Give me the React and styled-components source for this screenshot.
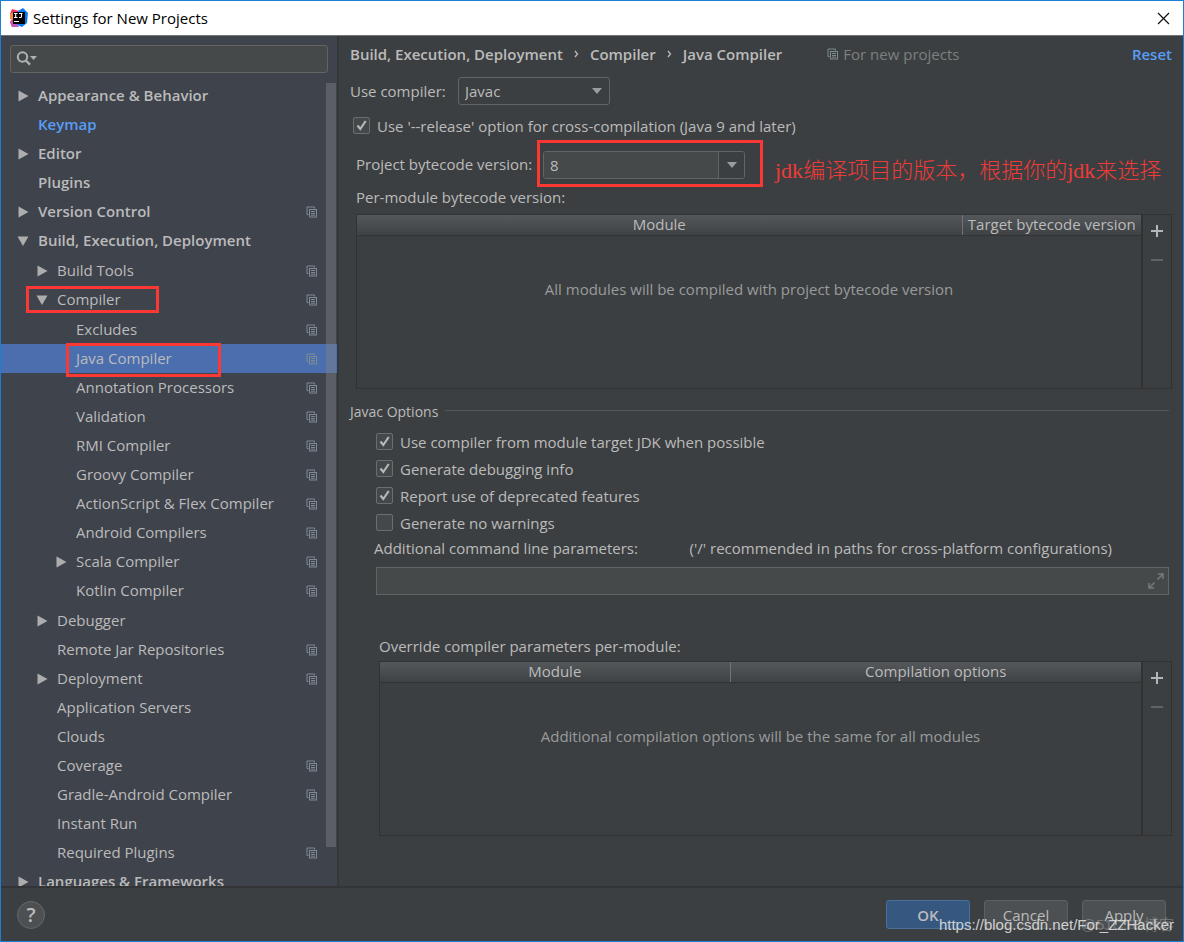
import React from "react";
import styled, { createGlobalStyle, css } from "styled-components";

const GlobalStyle = createGlobalStyle`
  *, *::before, *::after { box-sizing: border-box; }
  body {
    margin: 0;
    background: #3c3f41;
    color: #bbbbbb;
    font-family: "Open Sans", "Noto Sans", "Noto Sans CJK SC", sans-serif;
    font-size: 15px;
    line-height: 20px;
  }
  button, input, select { font: inherit; color: inherit; }
`;

const Window = styled.div`
  position: relative;
  display: flex;
  flex-direction: column;
  height: 100vh;
  border: 1px solid #1d7fd3;
  overflow: hidden;
`;

const TitleBar = styled.header`
  display: flex;
  align-items: center;
  flex: none;
  height: 35px;
  padding: 0 9px 0 8px;
  gap: 4px;
  background: #ffffff;
  color: #000000;
  border-bottom: 1px solid #6f7678;
`;

const Title = styled.h1`
  flex: 1;
  margin: 0;
  font-size: 15px;
  font-weight: 400;
`;

const CloseButton = styled.button`
  display: flex;
  padding: 4px;
  border: 0;
  background: none;
`;

const Body = styled.div`
  display: flex;
  flex: 1;
  min-height: 0;
`;

const Sidebar = styled.nav`
  position: relative;
  display: flex;
  flex-direction: column;
  flex: none;
  width: 338px;
  background: #3f434c;
  border-right: 2px solid #35383b;
  overflow: hidden;
`;

const SearchBox = styled.label`
  display: flex;
  align-items: center;
  flex: none;
  height: 28px;
  margin: 9px 9px 8px;
  padding-left: 5px;
  border: 1px solid #646464;
  border-radius: 3px;
  background: #45494a;
`;

const SearchInput = styled.input`
  flex: 1;
  min-width: 0;
  border: 0;
  outline: 0;
  background: none;
`;

const TreeList = styled.ul`
  list-style: none;
  margin: 0;
  padding: ${(p) => (p.$level === 0 ? 0 : p.$level === 1 ? "1px 0 0" : "1px 0")};
`;

const Row = styled.div`
  position: relative;
  display: flex;
  align-items: center;
  height: 29px;
  padding-left: ${(p) => 16 + p.$level * 19}px;
  padding-right: 19px;
  background: ${(p) => (p.$selected ? "#4b6eaf" : "transparent")};
  color: ${(p) => (p.$link ? "#589df6" : "#bbbbbb")};
  font-weight: ${(p) => (p.$level === 0 ? 600 : 400)};
`;

const Arrow = styled.span`
  display: flex;
  flex: none;
  width: 21px;
`;

const RowLabel = styled.span`
  flex: 1;
  padding-bottom: 2px;
  white-space: nowrap;
`;

const Highlight = styled.span`
  position: absolute;
  border: 3px solid #fb3833;
  pointer-events: none;
  ${(p) =>
    p.$kind === "child"
      ? css`left: 65px; width: 155px; top: -1px; bottom: -4px;`
      : css`left: 25px; width: 133px; top: 1px; bottom: 1px;`}
`;

const ScrollThumb = styled.div`
  position: absolute;
  top: 47px;
  right: 1px;
  bottom: 39px;
  width: 10px;
  background: rgba(128, 128, 132, 0.45);
`;

const Main = styled.main`
  flex: 1;
  min-width: 0;
  padding: 7px 11px 0;
`;

const Header = styled.div`
  display: flex;
  align-items: center;
  height: 22px;
  margin-bottom: 12px;
`;

const Crumbs = styled.div`
  display: flex;
  align-items: center;
  gap: 11px;
  font-weight: 600;
  white-space: nowrap;
`;

const Scope = styled.div`
  display: flex;
  align-items: center;
  flex: 1;
  gap: 4px;
  margin-left: 45px;
  color: #7d7f80;
`;

const ResetLink = styled.a`
  color: #589df6;
  font-weight: 600;
  text-decoration: none;
`;

const FieldRow = styled.div`
  display: flex;
  align-items: center;
  height: 28px;
  margin-bottom: 7px;
`;

const FieldLabel = styled.label`
  width: ${(p) => p.$width}px;
  padding-left: ${(p) => p.$indent || 0}px;
  white-space: nowrap;
`;

const SelectWrap = styled.div`
  position: relative;
  display: flex;
  align-items: center;
  width: 152px;
  height: 28px;
`;

const Select = styled.select`
  width: 100%;
  height: 100%;
  padding: 0 6px;
  appearance: none;
  border: 1px solid #646464;
  border-radius: 3px;
  background: #3c3f41;
`;

const SelectArrow = styled.span`
  position: absolute;
  right: 8px;
  display: flex;
  pointer-events: none;
`;

const ComboFrame = styled.div`
  display: flex;
  padding: 8px 15px 5px 3px;
  border: 3px solid #fb3833;
`;

const Combo = styled.div`
  display: flex;
  width: 202px;
  height: 28px;
  border: 1px solid #646464;
  border-radius: 3px;
  overflow: hidden;
`;

const ComboInput = styled.input`
  flex: 1;
  min-width: 0;
  padding: 0 6px;
  border: 0;
  background: #45494a;
`;

const ComboButton = styled.button`
  display: flex;
  align-items: center;
  justify-content: center;
  width: 26px;
  padding: 0;
  border: 0;
  border-left: 1px solid #646464;
  background: #3c3f41;
`;

const VersionRow = styled.div`
  display: flex;
  align-items: center;
  margin-top: 1px;
`;

const Note = styled.p`
  margin: 12px 0 0 12px;
  color: #ee3b38;
  font-family: "Noto Sans CJK SC", sans-serif;
  font-weight: 300;
  font-size: 22px;
  line-height: 28px;
  white-space: nowrap;
`;

const NoteLatin = styled.span`
  font-family: "Liberation Serif", serif;
`;

const CheckLabel = styled.label`
  display: flex;
  align-items: center;
  gap: 7px;
  height: 27px;
  padding-left: ${(p) => p.$indent}px;
`;

const CheckBox = styled.input`
  appearance: none;
  flex: none;
  width: 17px;
  height: 17px;
  margin: 0;
  border: 1px solid #6b6e6f;
  border-radius: 2px;
  background: #43494a;
`;

const CheckHolder = styled.span`
  position: relative;
  display: flex;
`;

const CheckMark = styled.svg`
  position: absolute;
  inset: 0;
  pointer-events: none;
`;

const SectionLabel = styled.div`
  padding-left: ${(p) => p.$indent}px;
`;

const TablePanel = styled.div`
  display: flex;
  height: 175px;
  margin: ${(p) => (p.$indent === 6 ? "7px 0 0 6px" : "5px 0 0 29px")};
  border: 1px solid #323232;
`;

const Table = styled.table`
  flex: 1;
  height: 100%;
  border-collapse: collapse;
  table-layout: fixed;
`;

const HeadCell = styled.th`
  width: ${(p) => p.$width};
  height: 20px;
  padding: 0;
  border-bottom: 1px solid #313335;
  border-left: ${(p) => (p.$divided ? "1px solid #707375" : "0")};
  background: linear-gradient(#54585b, #3f4244);
  font-weight: 400;
  line-height: 19px;
  white-space: nowrap;
`;

const EmptyCell = styled.td`
  padding: 43px 0 0;
  color: #999b9c;
  text-align: center;
  vertical-align: top;
`;

const TableTools = styled.div`
  display: flex;
  flex-direction: column;
  align-items: center;
  gap: 13px;
  width: 30px;
  padding-top: 8px;
  border-left: 2px solid #323232;
`;

const ToolButton = styled.button`
  display: flex;
  padding: 2px;
  border: 0;
  background: none;
`;

const Fieldset = styled.fieldset`
  min-width: 0;
  margin: 13px 0 0;
  padding: 0;
  border: 0;
`;

const Legend = styled.legend`
  display: flex;
  align-items: center;
  gap: 7px;
  width: 100%;
  height: 20px;
  margin-bottom: 6px;
  padding: 0 3px 0 0;
  font-size: 14px;
  &::after {
    content: "";
    flex: 1;
    height: 1px;
    margin-bottom: 4px;
    background: #54575a;
  }
`;

const ParamsHeader = styled.div`
  display: flex;
  justify-content: space-between;
  margin-top: 2px;
  padding: 0 60px 0 24px;
  white-space: nowrap;
`;

const ParamsField = styled.div`
  display: flex;
  align-items: center;
  height: 28px;
  margin: 9px 3px 41px 26px;
  padding-right: 4px;
  border: 1px solid #646464;
  background: #45494a;
`;

const Footer = styled.footer`
  display: flex;
  align-items: center;
  flex: none;
  gap: 14px;
  height: 55px;
  padding: 0 17px 0 16px;
  border-top: 2px solid #323435;
`;

const HelpButton = styled.button`
  width: 28px;
  height: 28px;
  margin-right: auto;
  padding: 0;
  border: 1px solid #65686a;
  border-radius: 50%;
  background: #4c5052;
  font-size: 20px;
  font-weight: 600;
  line-height: 24px;
`;

const DialogButton = styled.button`
  width: 84px;
  height: 29px;
  padding: 0;
  border: 1px solid ${(p) => (p.$primary ? "#4a7099" : "#5e6162")};
  border-radius: 3px;
  background: ${(p) => (p.$primary ? "#365880" : "#4c5052")};
  font-weight: ${(p) => (p.$primary ? 600 : 400)};
`;

const Watermark = styled.div`
  position: absolute;
  right: 9px;
  bottom: 6px;
  color: ${(p) => (p.$faint ? "rgba(200, 200, 200, 0.35)" : "rgba(225, 225, 225, 0.9)")};
  font-family: "Liberation Sans", "Noto Sans CJK SC", sans-serif;
  font-size: 15px;
  white-space: nowrap;
  pointer-events: none;
`;

const AppLogo = () => (
  <svg width="20" height="20" viewBox="0 0 20 20" aria-hidden="true">
    <path d="M3 1 L10 3 L8 18 L3 19 L1 14 L3 11 L1 6 Z" fill="#f3315d" />
    <path d="M1 6 L5 4 L5 12 L1 11 Z" fill="#fd8a3c" />
    <path d="M9 3 L14 0 L19 5 L18 15 L13 19 L8 17 Z" fill="#087cfa" />
    <path d="M1 14 L5 12 L10 19 L3 19 Z" fill="#c757bc" />
    <rect x="4" y="4" width="12" height="12" fill="#000" />
    <path d="M5 5.500h3.500M6.700 5.500v4M5 9.500h3.500M10 5.500h3.500M12.500 5.500v3q0 1-1 1h-1.500" fill="none" stroke="#fff" strokeWidth="1.100" />
    <rect x="5" y="13" width="5" height="1" fill="#fff" />
  </svg>
);

const CloseIcon = () => (
  <svg width="13" height="13" viewBox="0 0 13 13" aria-hidden="true">
    <path d="M1 1l11 11M12 1L1 12" stroke="#111" strokeWidth="1.200" />
  </svg>
);

const SearchIcon = () => (
  <svg width="24" height="18" viewBox="0 0 24 18" aria-hidden="true">
    <circle cx="6.500" cy="7" r="4.700" fill="none" stroke="#afb1b3" strokeWidth="2" />
    <path d="M9.800 10.500L14 14.700" stroke="#afb1b3" strokeWidth="2.400" />
    <path d="M14 6h7l-3.500 4z" fill="#afb1b3" />
  </svg>
);

const TreeArrow = ({ open }) => (
  <svg width="12" height="12" viewBox="0 0 12 12" aria-hidden="true">
    <path d={open ? "M0.500 1.500h11L6 11z" : "M1.500 0.500v11L11.500 6z"} fill="#adadad" />
  </svg>
);

const CopyIcon = () => (
  <svg width="12" height="12" viewBox="0 0 12 12" aria-hidden="true">
    <path d="M2.500 8.500h-1.500v-7.500h7.500v1.500" fill="none" stroke="#7f8b91" />
    <rect x="3.500" y="3.500" width="7" height="7.500" fill="none" stroke="#7f8b91" />
    <path d="M5 5.500h4M5 7.500h4M5 9.200h4" stroke="#7f8b91" />
  </svg>
);

const CrumbArrow = () => (
  <svg width="5" height="8" viewBox="0 0 5 8" aria-hidden="true">
    <path d="M1 1l2.500 3L1 7" fill="none" stroke="#bbbbbb" strokeWidth="1.300" />
  </svg>
);

const DownArrow = () => (
  <svg width="10" height="6" viewBox="0 0 10 6" aria-hidden="true">
    <path d="M0 0h10L5 6z" fill="#9a9da0" />
  </svg>
);

const PlusIcon = () => (
  <svg width="12" height="12" viewBox="0 0 12 12" aria-hidden="true">
    <path d="M6 0v12M0 6h12" stroke="#b4b6b8" strokeWidth="2" />
  </svg>
);

const MinusIcon = () => (
  <svg width="12" height="12" viewBox="0 0 12 12" aria-hidden="true">
    <path d="M0 6h12" stroke="#616466" strokeWidth="2" />
  </svg>
);

const ExpandIcon = () => (
  <svg width="16" height="16" viewBox="0 0 16 16" aria-hidden="true">
    <path d="M10 1h5v5M14.500 1.500L9.500 6.500M6 15H1V10M1.500 14.500L6.500 9.500" fill="none" stroke="#73787b" strokeWidth="1.600" />
  </svg>
);

const TREE = [
  { label: "Appearance & Behavior", arrow: "closed" },
  { label: "Keymap", link: true },
  { label: "Editor", arrow: "closed" },
  { label: "Plugins" },
  { label: "Version Control", arrow: "closed", copy: true },
  {
    label: "Build, Execution, Deployment",
    arrow: "open",
    children: [
      { label: "Build Tools", arrow: "closed", copy: true },
      {
        label: "Compiler",
        arrow: "open",
        copy: true,
        highlight: "parent",
        children: [
          { label: "Excludes", copy: true },
          { label: "Java Compiler", copy: true, selected: true, highlight: "child" },
          { label: "Annotation Processors", copy: true },
          { label: "Validation", copy: true },
          { label: "RMI Compiler", copy: true },
          { label: "Groovy Compiler", copy: true },
          { label: "ActionScript & Flex Compiler", copy: true },
          { label: "Android Compilers", copy: true },
          { label: "Scala Compiler", arrow: "closed", copy: true },
          { label: "Kotlin Compiler", copy: true },
        ],
      },
      { label: "Debugger", arrow: "closed" },
      { label: "Remote Jar Repositories", copy: true },
      { label: "Deployment", arrow: "closed", copy: true },
      { label: "Application Servers" },
      { label: "Clouds" },
      { label: "Coverage", copy: true },
      { label: "Gradle-Android Compiler", copy: true },
      { label: "Instant Run" },
      { label: "Required Plugins", copy: true },
    ],
  },
  { label: "Languages & Frameworks", arrow: "closed" },
];

const Tree = ({ items, level = 0 }) => (
  <TreeList $level={level}>
    {items.map((item) => (
      <li key={item.label}>
        <Row $level={level} $selected={item.selected} $link={item.link}>
          <Arrow>{item.arrow && <TreeArrow open={item.arrow === "open"} />}</Arrow>
          <RowLabel>{item.label}</RowLabel>
          {item.copy && <CopyIcon />}
          {item.highlight && <Highlight $kind={item.highlight} />}
        </Row>
        {item.children && <Tree items={item.children} level={level + 1} />}
      </li>
    ))}
  </TreeList>
);

const Check = ({ label, checked, indent }) => {
  const [on, setOn] = React.useState(checked);
  return (
    <CheckLabel $indent={indent}>
      <CheckHolder>
        <CheckBox type="checkbox" checked={on} onChange={(e) => setOn(e.target.checked)} />
        {on && (
          <CheckMark width="17" height="17" viewBox="0 0 17 17" aria-hidden="true">
            <path d="M4.500 8.500L7.300 12L12.700 4" fill="none" stroke="#b5b7b8" strokeWidth="2.200" />
          </CheckMark>
        )}
      </CheckHolder>
      {label}
    </CheckLabel>
  );
};

const ModuleTable = ({ indent, columns, empty }) => (
  <TablePanel $indent={indent}>
    <Table>
      <thead>
        <tr>
          {columns.map((c, i) => (
            <HeadCell key={c.label} $width={c.width} $divided={i > 0}>
              {c.label}
            </HeadCell>
          ))}
        </tr>
      </thead>
      <tbody>
        <tr>
          <EmptyCell colSpan={columns.length}>{empty}</EmptyCell>
        </tr>
      </tbody>
    </Table>
    <TableTools>
      <ToolButton aria-label="Add">
        <PlusIcon />
      </ToolButton>
      <ToolButton aria-label="Remove">
        <MinusIcon />
      </ToolButton>
    </TableTools>
  </TablePanel>
);

export default function App() {
  return (
    <>
      <GlobalStyle />
      <Window>
        <TitleBar>
          <AppLogo />
          <Title>Settings for New Projects</Title>
          <CloseButton aria-label="Close">
            <CloseIcon />
          </CloseButton>
        </TitleBar>
        <Body>
          <Sidebar>
            <SearchBox>
              <SearchIcon />
              <SearchInput type="text" aria-label="Search settings" />
            </SearchBox>
            <Tree items={TREE} />
            <ScrollThumb />
          </Sidebar>
          <Main>
            <Header>
              <Crumbs>
                <span>Build, Execution, Deployment</span>
                <CrumbArrow />
                <span>Compiler</span>
                <CrumbArrow />
                <span>Java Compiler</span>
              </Crumbs>
              <Scope>
                <CopyIcon />
                For new projects
              </Scope>
              <ResetLink href="#reset">Reset</ResetLink>
            </Header>
            <FieldRow>
              <FieldLabel $width={108} htmlFor="compiler">Use compiler:</FieldLabel>
              <SelectWrap>
                <Select id="compiler" defaultValue="Javac">
                  <option>Javac</option>
                </Select>
                <SelectArrow>
                  <DownArrow />
                </SelectArrow>
              </SelectWrap>
            </FieldRow>
            <Check
              checked
              indent={3}
              label="Use '--release' option for cross-compilation (Java 9 and later)"
            />
            <VersionRow>
              <FieldLabel $width={187} $indent={6} htmlFor="bytecode">Project bytecode version:</FieldLabel>
              <ComboFrame>
                <Combo>
                  <ComboInput id="bytecode" type="text" defaultValue="8" />
                  <ComboButton aria-label="Show versions">
                    <DownArrow />
                  </ComboButton>
                </Combo>
              </ComboFrame>
              <Note>
                <NoteLatin>jdk</NoteLatin>编译项目的版本，根据你的<NoteLatin>jdk</NoteLatin>来选择
              </Note>
            </VersionRow>
            <SectionLabel $indent={6}>Per-module bytecode version:</SectionLabel>
            <ModuleTable
              indent={6}
              columns={[
                { label: "Module", width: "auto" },
                { label: "Target bytecode version", width: "179px" },
              ]}
              empty="All modules will be compiled with project bytecode version"
            />
            <Fieldset>
              <Legend>Javac Options</Legend>
              <Check checked indent={26} label="Use compiler from module target JDK when possible" />
              <Check checked indent={26} label="Generate debugging info" />
              <Check checked indent={26} label="Report use of deprecated features" />
              <Check checked={false} indent={26} label="Generate no warnings" />
              <ParamsHeader>
                <label htmlFor="params">Additional command line parameters:</label>
                <span>('/' recommended in paths for cross-platform configurations)</span>
              </ParamsHeader>
              <ParamsField>
                <SearchInput id="params" type="text" />
                <ExpandIcon />
              </ParamsField>
              <SectionLabel $indent={29}>Override compiler parameters per-module:</SectionLabel>
              <ModuleTable
                indent={29}
                columns={[
                  { label: "Module", width: "46%" },
                  { label: "Compilation options", width: "54%" },
                ]}
                empty="Additional compilation options will be the same for all modules"
              />
            </Fieldset>
          </Main>
        </Body>
        <Footer>
          <HelpButton aria-label="Help">?</HelpButton>
          <DialogButton $primary>OK</DialogButton>
          <DialogButton>Cancel</DialogButton>
          <DialogButton>Apply</DialogButton>
        </Footer>
        <Watermark $faint>@51CTO博客</Watermark>
        <Watermark>https://blog.csdn.net/For_ZZHacker</Watermark>
      </Window>
    </>
  );
}
